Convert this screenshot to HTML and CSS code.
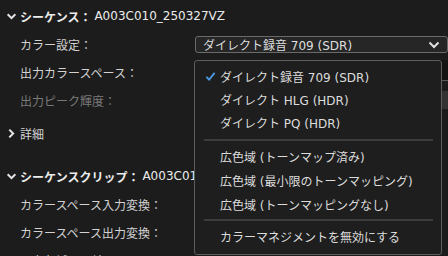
FILE: index.html
```html
<!DOCTYPE html>
<html lang="ja">
<head>
  <meta charset="UTF-8">
  <title>カラーマネジメント</title>
  <link rel="stylesheet" href="styles.css">
</head>
<body>
  <div class="panel">
    <div class="section-head">
      <svg class="chev" viewBox="0 0 10 10"><polyline points="1.5,3 5,6.5 8.5,3"/></svg>
      <span class="head-label">シーケンス：</span><span class="head-value">A003C010_250327VZ</span>
    </div>
    <div class="row">
      <span class="label">カラー設定：</span>
      <div class="select">
        <span>ダイレクト録音 709 (SDR)</span>
        <svg class="select-chev" viewBox="0 0 12 8"><polyline points="1.5,1.5 6,6 10.5,1.5"/></svg>
      </div>
    </div>
    <div class="row">
      <span class="label">出力カラースペース：</span>
      <div class="hidden-box dark"></div>
    </div>
    <div class="row">
      <span class="label disabled">出力ピーク輝度：</span>
      <div class="hidden-box grey"></div>
    </div>
    <div class="row sub-head">
      <svg class="chev" viewBox="0 0 10 10"><polyline points="3,1.5 6.5,5 3,8.5"/></svg>
      <span>詳細</span>
    </div>

    <div class="section-head second">
      <svg class="chev" viewBox="0 0 10 10"><polyline points="1.5,3 5,6.5 8.5,3"/></svg>
      <span class="head-label">シーケンスクリップ：</span><span class="head-value">A003C010_250327VZ</span>
    </div>
    <div class="row">
      <span class="label">カラースペース入力変換：</span>
    </div>
    <div class="row">
      <span class="label">カラースペース出力変換：</span>
    </div>
    <div class="row">
      <span class="label">入力色域の圧縮：</span>
      <div class="select low"><span>標準以外</span></div>
    </div>
  </div>

  <div class="menu">
    <div class="item checked">
      <svg class="check" viewBox="0 0 12 12"><polyline points="1.5,6.5 4.5,9.5 10.5,2"/></svg>
      ダイレクト録音 709 (SDR)
    </div>
    <div class="item">ダイレクト HLG (HDR)</div>
    <div class="item">ダイレクト PQ (HDR)</div>
    <div class="sep"></div>
    <div class="item tall">広色域 (トーンマップ済み)</div>
    <div class="item tall">広色域 (最小限のトーンマッピング)</div>
    <div class="item tall">広色域 (トーンマッピングなし)</div>
    <div class="sep second"></div>
    <div class="item tall">カラーマネジメントを無効にする</div>
  </div>
</body>
</html>
```

FILE: styles.css
```css
body {
  margin: 0;
  background: #1c1c1c;
  color: #d2d2d2;
  font-family: "DejaVu Sans", "Noto Sans CJK JP", sans-serif;
  font-size: 12px;
  overflow: hidden;
  width: 448px;
  height: 256px;
}
.panel {
  padding-top: 2px;
}
.section-head {
  height: 28px;
  display: flex;
  align-items: center;
  padding-left: 6px;
  color: #ececec;
  white-space: nowrap;
}
.section-head.second {
  margin-top: 15px;
}
.head-label {
  font-weight: bold;
  margin-right: 3px;
}
.chev {
  width: 11px;
  height: 11px;
  margin-right: 3px;
  fill: none;
  stroke: #e6e6e6;
  stroke-width: 1.8;
}
.row {
  height: 28px;
  display: flex;
  align-items: center;
  padding-left: 20px;
  white-space: nowrap;
}
.row.sub-head {
  margin-top: 5px;
  padding-left: 6px;
}
.label {
  width: 175px;
  flex-shrink: 0;
}
.label.disabled {
  color: #7a7a7a;
}
.select {
  width: 244px;
  height: 15px;
  border: 1px solid #6a6a6a;
  border-radius: 3px;
  background: #262626;
  display: flex;
  align-items: center;
  justify-content: space-between;
  padding-left: 7px;
  box-sizing: content-box;
  color: #dedede;
  margin-top: 1px;
}
.select-chev {
  width: 12px;
  height: 8px;
  margin-right: 7px;
  fill: none;
  stroke: #e0e0e0;
  stroke-width: 2;
}
.select.low {
  align-self: flex-end;
  height: 22px;
  margin-bottom: -20px;
  align-items: flex-start;
}
.hidden-box {
  width: 270px;
  height: 20px;
}
.hidden-box.dark {
  background: #131313;
  border-bottom: 1px solid #5a5a5a;
  margin-top: -4px;
}
.hidden-box.grey {
  background: #333333;
  height: 18px;
}
.menu {
  position: absolute;
  left: 194px;
  top: 60px;
  width: 246px;
  height: 189px;
  border: 1px solid #5c5c5c;
  border-radius: 3px;
  background: #1e1e1e;
  padding-top: 4px;
  color: #dcdcdc;
  white-space: nowrap;
}
.item {
  height: 23px;
  display: flex;
  align-items: center;
  padding-left: 25px;
  position: relative;
}
.item.tall {
  height: 24px;
}
.check {
  position: absolute;
  left: 10px;
  top: 6px;
  width: 11px;
  height: 11px;
  fill: none;
  stroke: #4c9be8;
  stroke-width: 2;
}
.sep {
  height: 2px;
  background: #3c3c3c;
  margin: 5px 8px 3px 9px;
}
.sep.second {
  margin-top: 3px;
}
```
